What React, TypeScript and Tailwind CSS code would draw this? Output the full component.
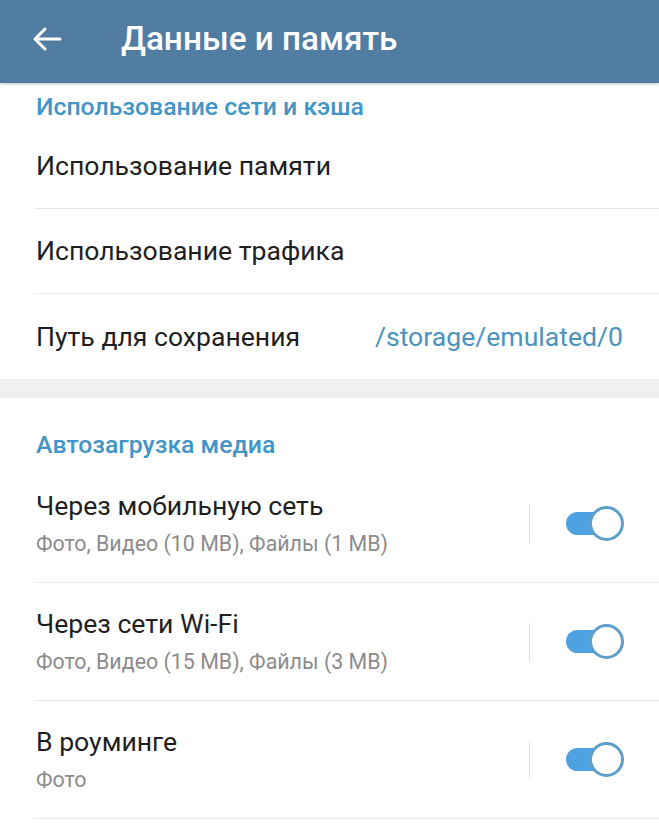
import React from "react";

function Toggle() {
  return (
    <div className="relative w-[60px] h-[36px] flex items-center">
      <div className="absolute left-[2px] w-[44px] h-[23px] rounded-full bg-[#4fa2e2]" />
      <div className="absolute right-0 w-[35px] h-[35px] rounded-full bg-white border-[3px] border-[#5f9fcc]" />
    </div>
  );
}

function SimpleRow({ title, value, divider = true }: { title: string; value?: string; divider?: boolean }) {
  return (
    <div className="pl-[34px]">
      <div className={`h-[85px] flex items-center justify-between pr-[36px] ${divider ? "border-b border-[#e9e9e9]" : ""}`}>
        <span className="pl-[2px] text-[26.6px] text-[#1f1f1f]">{title}</span>
        {value && <span className="text-[26.6px] text-[#4b93bd]">{value}</span>}
      </div>
    </div>
  );
}

function ToggleRow({ title, sub }: { title: string; sub: string }) {
  return (
    <div className="pl-[34px]">
      <div className="h-[118px] flex items-center border-b border-[#e9e9e9] pr-[35px]">
        <div className="flex-1 pl-[2px] flex flex-col">
          <span className="text-[26.6px] leading-[30px] text-[#1f1f1f]">{title}</span>
          <span className="mt-[10px] text-[21.4px] leading-[26px] text-[#8c8c8c]">{sub}</span>
        </div>
        <div className="w-px h-[38px] bg-[#dedede] mr-[34px]" />
        <Toggle />
      </div>
    </div>
  );
}

export default function App() {
  return (
    <div className="w-[659px] h-[823px] bg-white overflow-hidden" style={{ fontFamily: "Roboto, 'Noto Sans', sans-serif" }}>
      <div className="h-[83px] bg-[#527da3] flex items-center shadow-[0_1px_3px_rgba(0,0,0,0.25)] relative z-10">
        <svg width="30" height="26" viewBox="0 0 30 26" className="ml-[32px] -mt-[6px]">
          <path d="M28 13H3M13 3L3 13l10 10" fill="none" stroke="white" strokeWidth="3" strokeLinecap="round" strokeLinejoin="round" />
        </svg>
        <span className="ml-[59px] -mt-[6px] text-[33.3px] font-medium text-white">Данные и память</span>
      </div>
      <div className="pt-[6px]">
        <div className="h-[35px] pl-[36px] flex items-center text-[24.8px] font-medium text-[#4295c6]">Использование сети и кэша</div>
        <SimpleRow title="Использование памяти" />
        <SimpleRow title="Использование трафика" />
        <SimpleRow title="Путь для сохранения" value="/storage/emulated/0" divider={false} />
      </div>
      <div className="h-[19px] bg-[#f0f0f0]" />
      <div>
        <div className="h-[67px] pl-[36px] pt-[32px] text-[24.8px] leading-[30px] font-medium text-[#4295c6]">Автозагрузка медиа</div>
        <ToggleRow title="Через мобильную сеть" sub="Фото, Видео (10 MB), Файлы (1 MB)" />
        <ToggleRow title="Через сети Wi-Fi" sub="Фото, Видео (15 MB), Файлы (3 MB)" />
        <ToggleRow title="В роуминге" sub="Фото" />
      </div>
    </div>
  );
}
